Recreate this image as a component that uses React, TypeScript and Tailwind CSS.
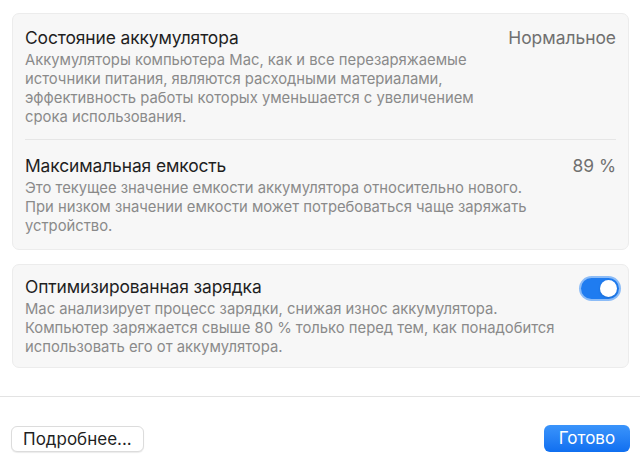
import React, { useState } from 'react';

const font = { fontFamily: 'Inter, "Noto Sans", sans-serif' };

function Row({ title, value, children }: { title: string; value?: React.ReactNode; children: React.ReactNode }) {
    return (
        <div className="flex flex-col">
            <div className="flex items-center justify-between h-[22px]">
                <span className="text-[17.4px] text-[#1f1f1f] tracking-[-0.1px]">{title}</span>
                {value}
            </div>
            <p className="mt-[2px] text-[14.8px] leading-[19px] text-[#8a8a8a]">{children}</p>
        </div>
    );
}

function Toggle() {
    const [on, setOn] = useState(true);
    return (
        <button
            onClick={() => setOn(!on)}
            className="-mr-[5px] mt-[2px] rounded-full p-[2px] bg-[#8cbcf7]"
        >
            <span className={`flex items-center w-[38px] h-[21px] rounded-full px-[2px] ${on ? 'bg-[#1f7cf0] justify-end' : 'bg-[#d9d9d9] justify-start'}`}>
                <span className="w-[17px] h-[17px] rounded-full bg-white shadow-sm" />
            </span>
        </button>
    );
}

export default function App() {
    return (
        <div style={font} className="w-[640px] h-[465px] bg-white flex flex-col overflow-hidden">
            <div className="pl-3 pr-[11px] pt-[13px] flex flex-col gap-[14px]">
                <div className="bg-[#f7f7f7] border border-[#ececec] rounded-[7px] pl-3 pr-[12px] pt-[13px] pb-[13px]">
                    <Row title="Состояние аккумулятора" value={<span className="text-[17.4px] text-[#707070]">Нормальное</span>}>
                        Аккумуляторы компьютера Мас, как и все перезаряжаемые
                        <br />
                        источники питания, являются расходными материалами,
                        <br />
                        эффективность работы которых уменьшается с увеличением
                        <br />
                        срока использования.
                    </Row>
                    <div className="h-px bg-[#e6e6e6] mt-[12px] mb-[15px]" />
                    <Row title="Максимальная емкость" value={<span className="text-[17.4px] text-[#707070]">89 %</span>}>
                        Это текущее значение емкости аккумулятора относительно нового.
                        <br />
                        При низком значении емкости может потребоваться чаще заряжать
                        <br />
                        устройство.
                    </Row>
                </div>
                <div className="bg-[#f7f7f7] border border-[#ececec] rounded-[7px] pl-3 pr-[12px] pt-[11px] pb-[10px]">
                    <Row title="Оптимизированная зарядка" value={<Toggle />}>
                        Мас анализирует процесс зарядки, снижая износ аккумулятора.
                        <br />
                        Компьютер заряжается свыше 80 % только перед тем, как понадобится
                        <br />
                        использовать его от аккумулятора.
                    </Row>
                </div>
            </div>
            <div className="mt-[28px] h-px bg-[#e3e3e3]" />
            <div className="flex items-center justify-between pl-[11px] pr-[10px] pt-[28px]">
                <button className="h-[26px] px-[11px] rounded-[6px] bg-white border border-[#dcdcdc] shadow-[0_1px_1px_rgba(0,0,0,0.08)] text-[17px] text-[#1f1f1f]">
                    Подробнее...
                </button>
                <button className="h-[27px] w-[86px] rounded-[6px] bg-gradient-to-b from-[#3a94fb] to-[#0f6ff0] text-[17px] text-white">
                    Готово
                </button>
            </div>
        </div>
    );
}
